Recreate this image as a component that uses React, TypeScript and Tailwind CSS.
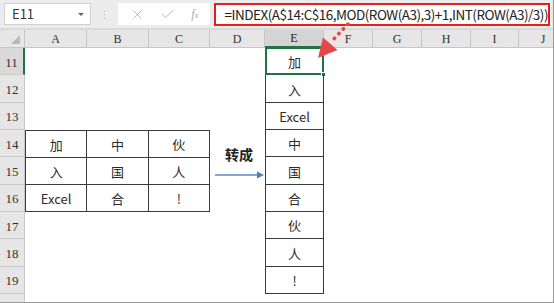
import { X, Check } from 'lucide-react';

const COLS = ['A', 'B', 'C', 'D', 'E', 'F', 'G', 'H', 'I', 'J'];
const ROWS = [11, 12, 13, 14, 15, 16, 17, 18, 19];
const TABLE = ['加', '中', '伙', '入', '国', '人', 'Excel', '合', '!'];
const RESULT = ['加', '入', 'Excel', '中', '国', '合', '伙', '人', '!'];
const FORMULA = '=INDEX(A$14:C$16,MOD(ROW(A3),3)+1,INT(ROW(A3)/3))';

const cjk = { fontFamily: '"Noto Sans CJK SC", "Noto Sans", sans-serif' };
const head = { fontFamily: '"Liberation Serif", "DejaVu Serif", serif' };

function FormulaBar() {
  return (
    <div className="flex h-[28px] items-center bg-[#ececec] pl-[4px] pr-[3px]">
      <div className="flex h-[22px] w-[88px] items-center justify-between border border-[#d0d0d0] bg-white pl-[7px] pr-[6px]">
        <span className="text-[13px] text-[#333]" style={cjk}>E11</span>
        <span className="h-0 w-0 border-x-[3px] border-t-[3px] border-x-transparent border-t-[#666]" />
      </div>
      <div className="flex w-[27px] justify-center text-[11px] leading-none text-[#b5b5b5]">⋮</div>
      <div className="flex h-[22px] w-[94px] items-center justify-around bg-white px-[4px] text-[#a9a9a9]">
        <X size={15} strokeWidth={1.3} />
        <Check size={15} strokeWidth={1.3} />
        <span className="text-[12px] italic" style={head}>f<span className="text-[9px]">x</span></span>
      </div>
      <div className="ml-[4px] flex h-[23px] flex-1 items-center border-[2.5px] border-[#e41e1e] bg-white pl-[8px]">
        <span className="whitespace-nowrap text-[13.5px] tracking-[-0.5px] text-[#222]" style={cjk}>{FORMULA}</span>
      </div>
    </div>
  );
}

function Sheet() {
  return (
    <div className="relative grid flex-1 grid-cols-[25px_62px_62px_61px_55px_59px_49px_49px_49px_48px_49px] grid-rows-[18px_repeat(9,27.33px)_1fr] bg-white">
      {/* corner */}
      <div className="relative border-b border-r border-[#c6c6c6] bg-[#e6e6e6]">
        <span className="absolute bottom-[3px] right-[4px] h-0 w-0 border-b-[9px] border-l-[9px] border-b-[#b9b9b9] border-l-transparent" />
      </div>
      {COLS.map((c) => (
        <div
          key={c}
          className={
            c === 'E'
              ? 'flex items-center justify-center border-b-2 border-r border-b-[#217346] border-r-[#c6c6c6] bg-[#d4d4d4] text-[12px] text-[#222]'
              : 'flex items-center justify-center border-b border-r border-[#c6c6c6] bg-[#e6e6e6] text-[12px] text-[#333]'
          }
          style={head}
        >
          {c}
        </div>
      ))}
      {ROWS.map((r) => (
        <div
          key={r}
          className={
            r === 11
              ? 'col-start-1 flex items-end justify-center border-b border-r-2 border-b-[#c9c9c9] border-r-[#217346] bg-[#d9d9d9] pb-[2px] text-[13px] text-[#333]'
              : 'col-start-1 flex items-end justify-center border-b border-r border-[#c9c9c9] bg-[#e6e6e6] pb-[2px] text-[13px] text-[#333]'
          }
          style={head}
        >
          {r}
        </div>
      ))}
      <div className="col-start-1 row-start-11 border-r border-[#c9c9c9] bg-[#e6e6e6]" />

      {/* source table A14:C16 */}
      <div className="col-span-3 col-start-2 row-span-3 row-start-5 grid grid-cols-3 grid-rows-3 border-l border-t border-[#3a3a3a]">
        {TABLE.map((t, i) => (
          <div key={i} className="flex items-center justify-center border-b border-r border-[#3a3a3a] pt-[2px] text-[13px] text-[#2b2b2b]" style={cjk}>
            {t}
          </div>
        ))}
      </div>

      {/* 转成 arrow */}
      <div className="col-start-5 row-span-2 row-start-5 flex flex-col items-center justify-center gap-[6px] pl-[3px] pt-[8px]">
        <span className="text-[14px] font-bold text-[#222]" style={cjk}>转成</span>
        <svg width="50" height="8" viewBox="0 0 50 8">
          <line x1="1" y1="4" x2="44" y2="4" stroke="#5b87c5" strokeWidth="1.3" />
          <path d="M43 0.5 L50 4 L43 7.5 Z" fill="#4f7fc0" />
        </svg>
      </div>

      {/* result column E11:E19 */}
      <div className="col-start-6 row-span-9 row-start-2 flex flex-col border-l border-[#3a3a3a]">
        {RESULT.map((t, i) => (
          <div
            key={i}
            className="relative flex flex-1 items-center justify-center border-b border-r border-[#3a3a3a] pt-[2px] text-[13px] text-[#2b2b2b]"
            style={cjk}
          >
            {t}
            {i === 0 && (
              <>
                <span className="absolute -left-px -top-px bottom-[-1px] right-[-1px] border-2 border-[#217346]" />
                <span className="absolute bottom-[-3px] right-[-3px] h-[5px] w-[5px] border border-white bg-[#217346]" />
              </>
            )}
          </div>
        ))}
      </div>

      {/* red pointer from formula to E11 */}
      <svg className="pointer-events-none absolute left-[300px] top-[-8px]" width="60" height="40" viewBox="0 0 60 40">
        <line x1="48" y1="2" x2="31" y2="20" stroke="#e5484b" strokeWidth="3.5" strokeDasharray="0.5 6" strokeLinecap="round" />
        <path d="M18 36 L23 15.5 L37.5 28 Z" fill="#e5484b" />
      </svg>
    </div>
  );
}

export default function App() {
  return (
    <div className="flex h-[303px] w-[554px] flex-col overflow-hidden border-b border-r border-[#9a9a9a] bg-[#ececec]">
      <FormulaBar />
      <div className="h-[2px] bg-[#d9d9d9]" />
      <Sheet />
    </div>
  );
}
